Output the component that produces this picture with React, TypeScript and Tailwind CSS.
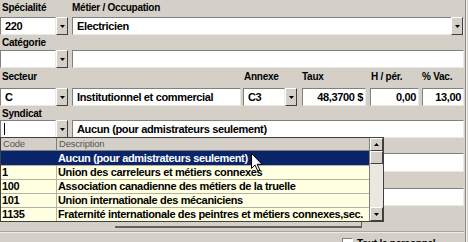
import React from "react";

const sunken =
  "h-[18px] shrink-0 bg-white border border-t-[#808080] border-l-[#808080] border-r-[#ece9e4] border-b-[#ece9e4] flex items-center";
const raised =
  "bg-[#d4d0c8] border border-t-white border-l-white border-r-[#404040] border-b-[#404040] flex items-center justify-center";
const value = "text-[11px] leading-[13px] font-bold tracking-[-0.35px] text-black whitespace-nowrap";
const label = "text-[10px] leading-[12px] font-bold tracking-[-0.25px] text-black whitespace-nowrap";

const Arrow = ({ up = false }: { up?: boolean }) => (
  <svg width="5" height="3" viewBox="0 0 5 3">
    <polygon points={up ? "0,3 5,3 2.5,0" : "0,0 5,0 2.5,3"} fill="#000" />
  </svg>
);

const DropBtn = () => (
  <div className={`${raised} w-[12px] h-[18px] shrink-0`}>
    <Arrow />
  </div>
);

const Field = ({ w, text, right = false }: { w: string; text?: string; right?: boolean }) => (
  <div className={`${sunken} ${w} ${right ? "justify-end pr-[2px]" : "pl-[4px]"}`}>
    <span className={value}>{text}</span>
  </div>
);

const rows = [
  { code: "1", desc: "Union des carreleurs et métiers connexes" },
  { code: "100", desc: "Association canadienne des métiers de la truelle" },
  { code: "101", desc: "Union internationale des mécaniciens" },
  { code: "1135", desc: "Fraternité internationale des peintres et métiers connexes,sec." },
];

const DropList = () => (
  <div className="absolute left-0 top-[137px] w-[384px] h-[85px] border border-[#404040] flex bg-[#ffffe1]">
    <div className="flex-1 flex flex-col">
      <div className="h-[13px] flex bg-[#d4d0c8] border-b border-[#808080]">
        <div className="w-[56px] border-r border-[#808080] pl-[2px] text-[9.5px] leading-[12px] text-[#555] tracking-[-0.2px]">
          Code
        </div>
        <div className="pl-[2px] text-[9.5px] leading-[12px] text-[#555] tracking-[-0.2px]">Description</div>
      </div>
      <div className="h-[14px] flex bg-[#0a246a] items-center">
        <div className="w-[56px]" />
        <div className={`${value} text-white pl-[1px]`}>Aucun (pour admistrateurs seulement)</div>
      </div>
      {rows.map((r) => (
        <div key={r.code} className="h-[14px] flex border-t border-[#b4b2a6]">
          <div className={`${value} w-[56px] border-r border-[#b4b2a6] pl-[1px] leading-[13px]`}>{r.code}</div>
          <div className={`${value} pl-[1px] leading-[13px]`}>{r.desc}</div>
        </div>
      ))}
    </div>
    <div className="w-[14px] flex flex-col border-l border-[#808080]">
      <div className={`${raised} h-[13px]`}>
        <Arrow up />
      </div>
      <div className={`${raised} h-[13px]`} />
      <div className="flex-1 bg-[#ebe8e2]" />
      <div className={`${raised} h-[14px]`}>
        <Arrow />
      </div>
    </div>
  </div>
);

export default function App() {
  return (
    <div className="relative w-[468px] h-[242px] overflow-hidden bg-[#d4d0c8] flex items-start font-['Liberation_Sans',Arial,sans-serif]">
      <div className="w-[464px] shrink-0">
        <div className="h-[17px] pt-[2px] flex">
          <div className={`${label} w-[72px] pl-[2px]`}>Spécialité</div>
          <div className={label}>Métier / Occupation</div>
        </div>
        <div className="flex">
          <Field w="w-[56px]" text="220" />
          <DropBtn />
          <div className={`${sunken} flex-1 ml-[4px] pl-[4px] justify-between`}>
            <span className={value}>Electricien</span>
            <DropBtn />
          </div>
        </div>

        <div className="h-[15px] pt-[2px]">
          <div className={`${label} pl-[2px]`}>Catégorie</div>
        </div>
        <div className="flex">
          <Field w="w-[56px]" />
          <DropBtn />
          <div className={`${sunken} flex-1 ml-[4px]`} />
        </div>

        <div className="h-[20px] pt-[3px] flex">
          <div className={`${label} w-[244px] pl-[2px]`}>Secteur</div>
          <div className={`${label} w-[58px]`}>Annexe</div>
          <div className={`${label} w-[69px]`}>Taux</div>
          <div className={`${label} w-[51px]`}>H / pér.</div>
          <div className={label}>% Vac.</div>
        </div>
        <div className="flex">
          <Field w="w-[56px]" text="C" />
          <DropBtn />
          <Field w="w-[169px] ml-[4px]" text="Institutionnel et commercial" />
          <Field w="w-[42px] ml-[2px]" text="C3" />
          <DropBtn />
          <Field w="w-[64px] ml-[5px]" text="48,3700 $" right />
          <Field w="w-[49px] ml-[4px]" text="0,00" right />
          <Field w="w-[42px] ml-[3px]" text="13,00" right />
        </div>

        <div className="h-[14px] pt-[2px]">
          <div className={`${label} pl-[2px]`}>Syndicat</div>
        </div>
        <div className="flex">
          <div className={`${sunken} w-[56px] pl-[3px]`}>
            <div className="w-[1px] h-[12px] bg-black" />
          </div>
          <DropBtn />
          <Field w="flex-1 ml-[4px]" text="Aucun (pour admistrateurs seulement)" />
        </div>

        <div className="h-[15px]" />
        <div className={`${sunken} h-[19px] ml-[72px]`} />
        <div className="h-[16px]" />
        <div className={`${sunken} h-[17px] ml-[72px]`} />
        <div className="h-[22px] flex items-end">
          <div className="ml-[115px] w-[247px] h-[18px] border-b-2 border-r border-[#606060]" />
        </div>
        <div className="h-[3px]" />
        <div className="border-t border-[#a9a59d] border-b border-b-[#eeece8]" />
        <div className="flex items-start pl-[342px] pt-[5px] gap-[4px]">
          <div className="w-[11px] h-[11px] shrink-0 bg-white border border-t-[#808080] border-l-[#808080] border-r-white border-b-white" />
          <div className={label}>Tout le personnel</div>
        </div>
      </div>
      <div className="w-[1px] h-full" />
      <div className="w-[1px] h-full bg-[#8c8880]" />
      <div className="w-[1px] h-full bg-[#f4f2ee]" />

      <DropList />

      <svg className="absolute left-[251px] top-[153px]" width="12" height="19" viewBox="0 0 12 19">
        <path d="M0.5 0.5 L0.5 15.5 L4 12 L6.8 18 L8.8 17 L6.2 11.3 L11 11.3 Z" fill="#fff" stroke="#000" strokeWidth="1" />
      </svg>
    </div>
  );
}
